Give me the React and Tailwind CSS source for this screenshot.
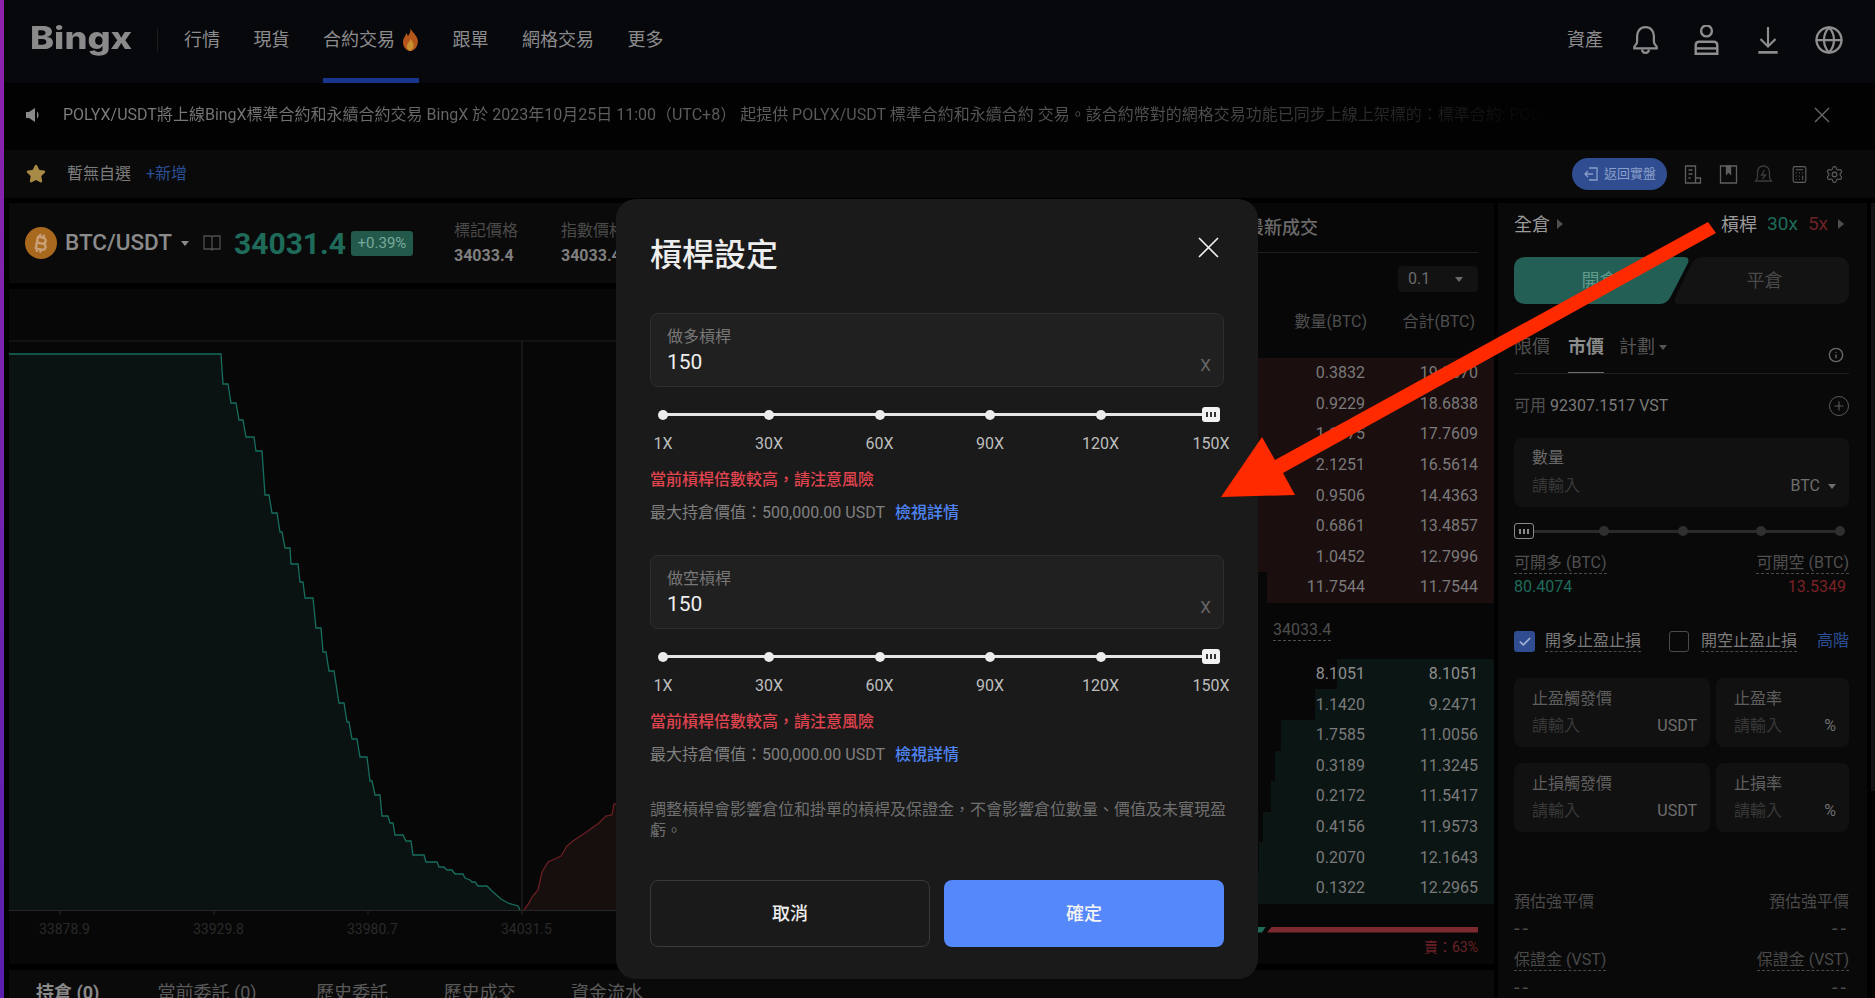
import { Globe, Settings, Star, Calculator, Info, Plus, Check } from 'lucide-react';
import { FaBitcoinSign } from 'react-icons/fa6';

const navItems = ['行情', '現貨', '合約交易', '跟單', '網格交易', '更多'];
const stops = ['30X', '60X', '90X', '120X', '150X'];

// full-width punctuation
const COMMA = '\uFF0C';
const COLON = '\uFF1A';
const LP = '\uFF08';
const RP = '\uFF09';

const noticeText = `POLYX/USDT將上線BingX標準合約和永續合約交易 BingX 於 2023年10月25日 11:00${LP}UTC+8${RP} 起提供 POLYX/USDT 標準合約和永續合約 交易。該合約幣對的網格交易功能已同步上線上架標的${COLON}標準合約: POLYX/USDT;永續合約: POLYX/USDT`;

const asks = [
  ['0.3832', '19.0670', 490],
  ['0.9229', '18.6838', 490],
  ['1.1975', '17.7609', 490],
  ['2.1251', '16.5614', 490],
  ['0.9506', '14.4363', 490],
  ['0.6861', '13.4857', 490],
  ['1.0452', '12.7996', 490],
  ['11.7544', '11.7544', 227],
];
const bids = [
  ['8.1051', '8.1051', 157],
  ['1.1420', '9.2471', 179],
  ['1.7585', '11.0056', 213],
  ['0.3189', '11.3245', 219],
  ['0.2172', '11.5417', 223],
  ['0.4156', '11.9573', 231],
  ['0.2070', '12.1643', 235],
  ['0.1322', '12.2965', 240],
];

const greenLine =
  '9,354 221,354 223,384 228,384 231,403 236,403 239,420 243,420 246,437 254,437 256,451 262,451 265,495 269,495 272,513 277,513 280,532 282,532 285,548 290,548 291,564 298,564 300,582 303,582 305,598 313,598 316,628 321,628 323,652 326,652 329,671 334,671 339,703 344,703 347,722 349,722 352,739 357,739 360,757 367,757 370,781 372,781 375,795 380,795 382,816 388,816 390,823 393,823 395,835 403,835 406,841 411,841 413,855 424,855 426,862 437,862 439,867 444,867 447,870 452,870 455,874 463,874 465,878 470,880 472,882 475,882 478,886 487,886 493,892 501,899 508,903 518,906 520,910';
const redLine =
  '524,910 529,903 532,897 538,890 542,872 548,862 561,856 567,846 573,841 585,833 592,828 599,823 606,816 612,815 614,804 640,800';

function DepthChart() {
  return (
    <svg viewBox="9 289 991 675" className="w-full flex-1 bg-[#070707] block">
      <line x1="9" y1="341" x2="1000" y2="341" stroke="#1e1e1e" />
      <line x1="9" y1="910.5" x2="1000" y2="910.5" stroke="#262626" />
      <line x1="522" y1="341" x2="522" y2="915" stroke="#282828" />
      <polygon points={`${greenLine} 520,910 9,910`} fill="#0b1212" />
      <polyline points={greenLine} fill="none" stroke="#176e5f" strokeWidth="1.3" />
      <polygon points={`${redLine} 640,910`} fill="#170e0e" />
      <polyline points={redLine} fill="none" stroke="#6b1f22" strokeWidth="1.3" />
      {[60, 214, 368].map((x) => (
        <line key={x} x1={x} y1="911" x2={x} y2="915" stroke="#2a2a2a" />
      ))}
      {[['33878.9', 39], ['33929.8', 193], ['33980.7', 347], ['34031.5', 501]].map(([t, x]) => (
        <text key={t} x={x} y="934" fontSize="14" fill="#2a2a2a">{t}</text>
      ))}
    </svg>
  );
}

function BookRow({ row, barColor, textColor = 'text-[#7a7a7a]' }) {
  return (
    <div className={`relative h-[30.6px] flex items-center justify-end pr-4 text-base ${textColor}`}>
      <div className={`absolute inset-y-0 right-0 ${barColor}`} style={{ width: row[2] }} />
      <span className="relative">{row[0]}</span>
      <span className="relative w-[113px] text-right">{row[1]}</span>
    </div>
  );
}

function OrderBook() {
  return (
    <div className="flex-1 bg-[#070707] flex flex-col overflow-hidden">
      <div className="h-[50px] mr-4 border-b border-[#1f1f1f] flex items-center pl-[242px] text-[18px] font-medium text-[#6a6a6a]">
        最新成交
      </div>
      <div className="flex justify-end pr-4 mt-[13px]">
        <div className="w-20 h-[26px] rounded bg-[#121212] flex items-center justify-between pl-[10px] pr-[15px] text-base text-[#6a6a6a]">
          0.1
          <span className="w-0 h-0 border-x-4 border-x-transparent border-t-[5px] border-t-[#6a6a6a]" />
        </div>
      </div>
      <div className="mt-5 h-5 flex justify-end pr-[19px] items-center text-base text-[#4f4f4f]">
        <span>數量(BTC)</span>
        <span className="w-[108px] text-right">合計(BTC)</span>
      </div>
      <div className="mt-[26px]">
        {asks.map((r) => (
          <BookRow key={r[1]} row={r} barColor="bg-[#1a0e0f]" />
        ))}
      </div>
      <div className="h-[56px] flex items-center pl-[269px]">
        <span className="text-base leading-5 text-[#4f4f4f] border-b border-dashed border-[#4f4f4f]">34033.4</span>
      </div>
      <div>
        {bids.map((r, i) => (
          <BookRow
            key={r[1]}
            row={r}
            barColor="bg-[#0b1514]"
            textColor={i === 0 ? 'text-[#8f8f8f]' : 'text-[#7a7a7a]'}
          />
        ))}
      </div>
      <div className="mt-[23px] ml-3 flex gap-px">
        <div className="w-[250px] h-[6px] bg-[#1f6b5a] [clip-path:polygon(0_0,100%_0,calc(100%-4px)_100%,0_100%)]" />
        <div className="w-[211px] h-[6px] bg-[#7d2a2e] [clip-path:polygon(5px_0,100%_0,100%_100%,0_100%)]" />
      </div>
      <div className="mt-[6px] pr-4 text-right text-sm leading-4 text-[#6b2226]">賣{COLON}63%</div>
    </div>
  );
}

function Caret({ className = '' }) {
  return <span className={`inline-block w-0 h-0 border-x-4 border-x-transparent border-t-[5px] ${className}`} />;
}

function CaretRight({ className = '' }) {
  return <span className={`inline-block w-0 h-0 border-y-[5px] border-y-transparent border-l-[6px] ${className}`} />;
}

function Ticks({ color }) {
  return (
    <span className="flex gap-[2px]">
      <span className={`w-[2px] h-[5px] ${color}`} />
      <span className={`w-[2px] h-[5px] ${color}`} />
      <span className={`w-[2px] h-[5px] ${color}`} />
    </span>
  );
}

function TpBox({ label, unit, className }) {
  return (
    <div className={`h-[69px] rounded-lg bg-[#111111] pl-[18px] pr-[13px] pt-[11px] ${className}`}>
      <div className="text-base leading-5 text-[#5f5f5f]">{label}</div>
      <div className="mt-[7px] flex justify-between leading-5 text-base">
        <span className="text-[#383838]">請輸入</span>
        <span className="text-[#6e6e6e]">{unit}</span>
      </div>
    </div>
  );
}

function Dashes() {
  return <span className="text-[20px] tracking-[3px]">--</span>;
}

function OrderPanel() {
  return (
    <div className="w-[369px] bg-[#090909] pl-4 pr-[18px] pt-[9px] flex flex-col">
      <div className="h-6 flex items-center text-[18px] text-[#9a9a9a]">
        全倉
        <CaretRight className="ml-[7px] border-l-[#4f4f4f]" />
        <span className="ml-auto">槓桿</span>
        <span className="ml-[10px] text-[19px] text-[#1f6b5a]">30x</span>
        <span className="ml-[10px] text-[19px] text-[#6b2226]">5x</span>
        <CaretRight className="ml-[10px] mr-[5px] border-l-[#4f4f4f]" />
      </div>
      <div className="relative mt-[21px] h-[47px]">
        <div className="absolute left-0 top-0 w-[175px] h-[47px] bg-[#235f54] flex items-center justify-center pr-1 text-[18px] text-[#5f9a8c] [clip-path:path('M12,0H170Q176,0,174,6L157,39Q153,47,146,47H12Q0,47,0,35V12Q0,0,12,0Z')]">
          開倉
        </div>
        <div className="absolute right-0 top-0 w-[175px] h-[47px] bg-[#131313] flex items-center justify-center pl-[6px] text-[18px] text-[#4a4a4a] [clip-path:path('M29,0H163Q175,0,175,12V35Q175,47,163,47H5Q-1,47,1,41L17,8Q21,0,29,0Z')]">
          平倉
        </div>
      </div>
      <div className="relative mt-[31px] h-[39px] border-b border-[#1f1f1f] flex text-[18px] leading-6">
        <span className="text-[#4f4f4f]">限價</span>
        <span className="relative ml-[18px] h-[38px] font-bold text-[#8c8c8c] border-b border-[#6b6b6b]">市價</span>
        <span className="ml-[15px] text-[#555555]">計劃</span>
        <Caret className="ml-1 mt-[10px] border-t-[#555555]" />
        <Info size={16} className="ml-auto mr-[5px] mt-3 text-[#6a6a6a]" />
      </div>
      <div className="mt-5 h-6 flex items-center text-base">
        <span className="text-[#4f4f4f]">可用</span>
        <span className="ml-1 text-[#7a7a7a]">92307.1517 VST</span>
        <span className="ml-auto w-5 h-5 rounded-full border border-[#5a5a5a] flex items-center justify-center">
          <Plus size={14} className="text-[#5a5a5a]" />
        </span>
      </div>
      <div className="mt-5 h-[69px] rounded-lg bg-[#111111] pl-[18px] pr-[13px] pt-[10px]">
        <div className="text-base leading-5 text-[#6a6a6a]">數量</div>
        <div className="mt-2 flex items-center leading-5 text-base">
          <span className="text-[#383838]">請輸入</span>
          <span className="ml-auto text-[#6e6e6e]">BTC</span>
          <Caret className="ml-2 border-t-[#6e6e6e]" />
        </div>
      </div>
      <div className="relative mt-4 h-4 flex items-center justify-between pr-1">
        <div className="absolute left-0 right-[9px] h-[3px] bg-[#2a2a2a]" />
        <span className="relative -mr-1 w-5 h-4 rounded-[3px] border-[1.5px] border-[#8a8a8a] bg-[#0a0a0a] flex items-center justify-center">
          <Ticks color="bg-[#8a8a8a]" />
        </span>
        {[0, 1, 2, 3].map((i) => (
          <span key={i} className="relative w-[10px] h-[10px] rounded-full bg-[#2f2f2f]" />
        ))}
      </div>
      <div className="mt-[14px] flex justify-between text-base leading-5 text-[#505050]">
        <span className="border-b border-dashed border-[#4a4a4a]">可開多 (BTC)</span>
        <span className="border-b border-dashed border-[#4a4a4a]">可開空 (BTC)</span>
      </div>
      <div className="mt-[3px] flex justify-between pr-[3px] text-base leading-5">
        <span className="text-[#1f6b5a]">80.4074</span>
        <span className="text-[#7a2226]">13.5349</span>
      </div>
      <div className="mt-[34px] h-[21px] flex items-start text-base leading-5 text-[#7a7a7a]">
        <span className="w-[21px] h-[21px] rounded-[3px] bg-[#2f4d90] flex items-center justify-center">
          <Check size={14} strokeWidth={3} className="text-[#a0b0d0]" />
        </span>
        <span className="ml-[10px] border-b border-dashed border-[#4a4a4a]">開多止盈止損</span>
        <span className="ml-7 w-5 h-[21px] rounded-[3px] border border-[#4a4a4a]" />
        <span className="ml-3 border-b border-dashed border-[#4a4a4a]">開空止盈止損</span>
        <span className="ml-auto text-[#2b4f94]">高階</span>
      </div>
      <div className="mt-[26px] flex gap-[6px]">
        <TpBox label="止盈觸發價" unit="USDT" className="w-[196px]" />
        <TpBox label="止盈率" unit="%" className="flex-1" />
      </div>
      <div className="mt-4 flex gap-[6px]">
        <TpBox label="止損觸發價" unit="USDT" className="w-[196px]" />
        <TpBox label="止損率" unit="%" className="flex-1" />
      </div>
      <div className="mt-[60px] flex justify-between text-base leading-5 text-[#4a4a4a]">
        <span>預估強平價</span>
        <span>預估強平價</span>
      </div>
      <div className="mt-[6px] flex justify-between leading-5 text-[#4a4a4a]">
        <Dashes />
        <Dashes />
      </div>
      <div className="mt-3 flex justify-between text-base leading-5 text-[#4a4a4a]">
        <span className="border-b border-dashed border-[#4a4a4a]">保證金 (VST)</span>
        <span className="border-b border-dashed border-[#4a4a4a]">保證金 (VST)</span>
      </div>
      <div className="mt-[6px] flex justify-between leading-5 text-[#4a4a4a]">
        <Dashes />
        <Dashes />
      </div>
    </div>
  );
}

function SliderStop({ label, last }) {
  return (
    <div className="relative w-[10px] flex flex-col items-center">
      <div className="h-[15px] flex items-center justify-center">
        {last ? (
          <span className="w-[18px] h-[15px] rounded-[3px] bg-[#f2f2f2] flex items-center justify-center">
            <Ticks color="bg-[#333333]" />
          </span>
        ) : (
          <span className="w-[10px] h-[10px] rounded-full bg-[#ececec]" />
        )}
      </div>
      <span className="mt-3 text-base leading-5 whitespace-nowrap text-[#bdbdbd]">{label}</span>
    </div>
  );
}

function Slider() {
  return (
    <div className="relative mt-5 px-2 flex">
      <div className="absolute left-[13px] right-[13px] top-[6px] h-[3px] bg-[#e6e6e6]" />
      <SliderStop label="1X" />
      <div className="ml-[96px] flex-1 flex justify-between">
        {stops.map((s, i) => (
          <SliderStop key={s} label={s} last={i === stops.length - 1} />
        ))}
      </div>
    </div>
  );
}

function LeverageBlock({ label, className = '' }) {
  return (
    <div className={className}>
      <div className="h-[74px] rounded-lg bg-[#202020] border border-[#2e2e2e] pl-4 pr-3 pt-[14px] relative">
        <div className="text-base leading-[18px] text-[#777777]">{label}</div>
        <div className="mt-[3px] text-[21px] leading-[26px] text-[#eeeeee]">150</div>
        <span className="absolute right-[12px] top-[39px] text-[17px] leading-6 text-[#666666]">X</span>
      </div>
      <Slider />
      <div className="mt-[15px] text-base leading-[22px] font-medium text-[#e0444f]">當前槓桿倍數較高{COMMA}請注意風險</div>
      <div className="mt-[11px] text-base leading-[22px] text-[#808080]">
        最大持倉價值{COLON}500,000.00 USDT
        <span className="ml-[10px] font-medium text-[#4f85f5]">檢視詳情</span>
      </div>
    </div>
  );
}

function LeverageModal() {
  return (
    <div className="absolute left-[616px] top-[199px] w-[642px] h-[780px] rounded-[20px] bg-[#1a1a1a] px-[34px] pt-9">
      <h2 className="text-[32px] leading-10 font-medium text-[#eeeeee]">槓桿設定</h2>
      <svg viewBox="0 0 21 21" className="absolute right-[39px] top-[38px] w-[21px] h-[21px]">
        <path d="M1 1l19 19M20 1L1 20" stroke="#f2f2f2" strokeWidth="1.6" fill="none" />
      </svg>
      <LeverageBlock label="做多槓桿" className="mt-[38px]" />
      <LeverageBlock label="做空槓桿" className="mt-[31px]" />
      <p className="mt-[33px] text-base leading-[21px] whitespace-nowrap text-[#6f6f6f]">
        調整槓桿會影響倉位和掛單的槓桿及保證金{COMMA}不會影響倉位數量、價值及未實現盈
        <br />
        虧。
      </p>
      <div className="mt-[39px] flex gap-[14px]">
        <button className="w-[280px] h-[67px] rounded-lg border border-[#3a3a3a] text-[18px] font-medium text-[#eeeeee]">
          取消
        </button>
        <button className="flex-1 h-[67px] rounded-lg bg-[#5488fb] text-[18px] font-medium text-[#f4f4f4]">
          確定
        </button>
      </div>
    </div>
  );
}

export default function App() {
  return (
    <div
      lang="zh-TW"
      className="relative w-[1875px] h-[998px] overflow-hidden bg-black flex [font-family:Roboto,'Noto_Sans_CJK_TC',sans-serif]"
    >
      <div className="w-1 flex-none bg-gradient-to-b from-[#8f22ad] to-[#5a1fb0]" />
      <div className="flex-1 flex flex-col min-w-0">
        {/* header */}
        <header className="h-[83px] flex-none bg-[#07080c] flex items-center pl-[26px] pr-[16px] pb-1">
          <span className="mb-1 w-[102px] origin-left scale-x-[1.17] text-[31px] font-extrabold leading-none text-[#8a8a8a] [font-family:Inter,sans-serif]">
            Bingx
          </span>
          <span className="ml-[25px] w-px h-6 bg-[#1c1c1c]" />
          <nav className="ml-[26px] h-full flex gap-[33.5px] text-[18px] text-[#8c8c8c]">
            {navItems.map((item) => (
              <div key={item} className="relative h-full flex items-center">
                {item}
                {item === '合約交易' && (
                  <>
                    <svg viewBox="0 0 16 22" className="ml-[7px] w-[17px] h-[23px]">
                      <path d="M8 0c1 4 6 6 7 12 .6 5-3 10-7 10s-8-4-7-10c.5-3 2-4 3-7 1 1 1.500 2 1.500 3C7 6 8.500 3 8 0z" fill="#b5561c" />
                      <path d="M8 10c.5 2 3.500 4 3 7-.3 3-2 5-3.500 5S4.500 20 4.500 17.500C4.500 15 7.500 13 8 10z" fill="#c9902f" />
                    </svg>
                    <span className="absolute left-0 right-0 -bottom-1 h-[5px] bg-[#17358c]" />
                  </>
                )}
              </div>
            ))}
          </nav>
          <span className="ml-auto text-[18px] text-[#8c8c8c]">資產</span>
          <div className="ml-3 flex items-center text-[#8e8e8e]">
            <span className="w-[61px] flex justify-center">
              <svg viewBox="2 1 22 25" className="w-[25px] h-[28px]" fill="none" stroke="currentColor" strokeWidth="2">
                <path d="M13 2c-5 0-7.500 4-7.500 8v5c0 2-1.500 3-2.500 4.500V21h20v-1.500C22 18 20.500 17 20.500 15v-5c0-4-2.500-8-7.500-8z" />
                <path d="M10 22c0 2 1.500 3 3 3s3-1 3-3" />
              </svg>
            </span>
            <span className="w-[61px] flex justify-center">
              <svg viewBox="3 1 20 25" className="w-[25px] h-[30px]" fill="none" stroke="currentColor" strokeWidth="2">
                <circle cx="13" cy="6" r="4.500" />
                <path d="M4 25v-7c0-2 1-3 3-3h12c2 0 3 1 3 3v7z" />
                <path d="M4 20.500h18" />
              </svg>
            </span>
            <span className="w-[61px] flex justify-center">
              <svg viewBox="0 0 26 26" className="w-[28px] h-[28px]" fill="none" stroke="currentColor" strokeWidth="2">
                <path d="M13 1v18M6 12l7 7 7-7" />
                <path d="M4 24.500h18" strokeWidth="2.500" />
              </svg>
            </span>
            <span className="w-[61px] flex justify-center">
              <Globe size={30} strokeWidth={1.8} />
            </span>
          </div>
        </header>

        {/* notice */}
        <div className="h-[67px] flex-none bg-[#020202] flex items-center pl-[21px] pr-[45px] pb-[3px]">
          <svg viewBox="0 0 16 16" className="w-4 h-4 flex-none">
            <path d="M1 5h3l6-4v14l-6-4H1z" fill="#8a8a8a" />
            <path d="M12 4.500c2 1.500 2 5.500 0 7z" fill="#8a8a8a" />
          </svg>
          <div className="ml-[22px] w-[1497px] overflow-hidden whitespace-nowrap text-base bg-[linear-gradient(90deg,#808080_0%,#626262_30%,#505050_75%,transparent_100%)] bg-clip-text text-transparent">
            {noticeText}
          </div>
          <svg viewBox="0 0 16 16" className="ml-auto w-4 h-4">
            <path d="M1 1l14 14M15 1L1 15" stroke="#6a6a6a" strokeWidth="1.4" />
          </svg>
        </div>

        {/* favourites bar */}
        <div className="h-[48px] flex-none bg-[#0a0a0a] flex items-center pl-[22px] pr-[31px]">
          <Star size={20} className="fill-[#a78a45] text-[#a78a45]" />
          <span className="ml-[21px] text-base text-[#7c7c7c]">暫無自選</span>
          <span className="ml-[15px] text-base text-[#2b4f94]">+新增</span>
          <div className="ml-auto h-8 w-[95px] rounded-full bg-[#2f4d90] flex items-center pl-3 text-[13px] text-[#8a9fc9]">
            <svg viewBox="0 0 14 14" className="w-[14px] h-[14px] mr-[6px]" fill="none" stroke="currentColor" strokeWidth="1.300">
              <path d="M5 1h8v12H5M9 7H1M4 4L1 7l3 3" />
            </svg>
            返回實盤
          </div>
          <div className="ml-4 flex gap-[16.5px] text-[#5f5f5f]">
            <svg viewBox="0 0 18 19" className="w-[19px] h-[19px]" fill="none" stroke="currentColor" strokeWidth="1.300">
              <path d="M2 1h10v17H2zM5 5h4M5 9h4M5 13h2M12 13h5v5H8" />
            </svg>
            <svg viewBox="0 0 18 19" className="w-[19px] h-[19px]" fill="none" stroke="currentColor" strokeWidth="1.300">
              <path d="M1 1h16v17H1z" />
              <path d="M7 1h4v8l-2-2-2 2z" fill="currentColor" />
            </svg>
            <svg viewBox="0 0 18 19" className="w-[19px] h-[19px] text-[#3c3c3c]" fill="none" stroke="currentColor" strokeWidth="1.300">
              <path d="M9 1c-4 0-6 3-6 7v5l-2 3h16l-2-3V8c0-4-2-7-6-7zM10 5L7 10h4l-3 4" />
            </svg>
            <Calculator size={19} strokeWidth={1.4} />
            <Settings size={19} strokeWidth={1.4} />
          </div>
        </div>

        {/* main */}
        <div className="mt-[5px] flex-1 flex pl-[5px] min-h-0">
          <div className="w-[1485px] flex-none flex flex-col">
            <div className="h-[761px] flex-none flex gap-1">
              <div className="w-[991px] flex-none flex flex-col">
                <div className="h-[80px] flex-none bg-[#0a0a0a] flex items-center pl-4">
                  <span className="w-8 h-8 rounded-full bg-[#a8681e] flex items-center justify-center text-[#caa078]">
                    <FaBitcoinSign size={19} className="rotate-12" />
                  </span>
                  <span className="ml-2 text-[22.5px] font-medium text-[#8b8b8b]">BTC/USDT</span>
                  <Caret className="ml-[9px] border-t-[#8b8b8b]" />
                  <svg viewBox="0 0 18 16" className="ml-[14px] w-[18px] h-4" fill="none" stroke="#4f4f4f" strokeWidth="1.300">
                    <path d="M1 1h7l1 1 1-1h7v13h-7l-1 1-1-1H1zM9 2v12" />
                  </svg>
                  <span className="ml-[13px] text-[30px] font-bold text-[#1f6b5a]">34031.4</span>
                  <span className="ml-[5px] h-[25px] w-[62px] rounded-[3px] bg-[#22594b] flex items-center justify-center text-[15px] text-[#79a99c]">
                    +0.39%
                  </span>
                  <div className="ml-[41px] flex flex-col gap-[5px]">
                    <span className="text-base leading-5 text-[#4a4a4a]">標記價格</span>
                    <span className="text-base leading-5 font-bold text-[#7f7f7f]">34033.4</span>
                  </div>
                  <div className="ml-[43px] flex flex-col gap-[5px]">
                    <span className="text-base leading-5 text-[#4a4a4a]">指數價格</span>
                    <span className="text-base leading-5 font-bold text-[#7f7f7f]">34033.4</span>
                  </div>
                </div>
                <div className="h-[6px] flex-none" />
                <DepthChart />
              </div>
              <OrderBook />
            </div>
            <div className="mt-[6px] flex-1 bg-[#0a0a0a] pl-[27px] pt-[13px] flex gap-[55.5px] text-[18px] leading-5 whitespace-nowrap text-[#5a5a5a]">
              <span className="w-[66px] font-bold text-[#8a8a8a]">持倉 (0)</span>
              <span className="w-[103px]">當前委託 (0)</span>
              <span>歷史委託</span>
              <span>歷史成交</span>
              <span>資金流水</span>
            </div>
          </div>
          <div className="w-1 flex-none" />
          <OrderPanel />
          <div className="ml-1 w-1 h-[588px] flex-none bg-[#121212]" />
        </div>
      </div>

      <LeverageModal />

      {/* annotation arrow on top of the screenshot */}
      <svg viewBox="0 0 1875 998" className="absolute inset-0 w-full h-full pointer-events-none">
        <polygon
          points="1708,222 1716,233 1283,473 1295,495 1221,497 1262,437 1275,460"
          fill="#ff2a00"
        />
      </svg>
    </div>
  );
}
